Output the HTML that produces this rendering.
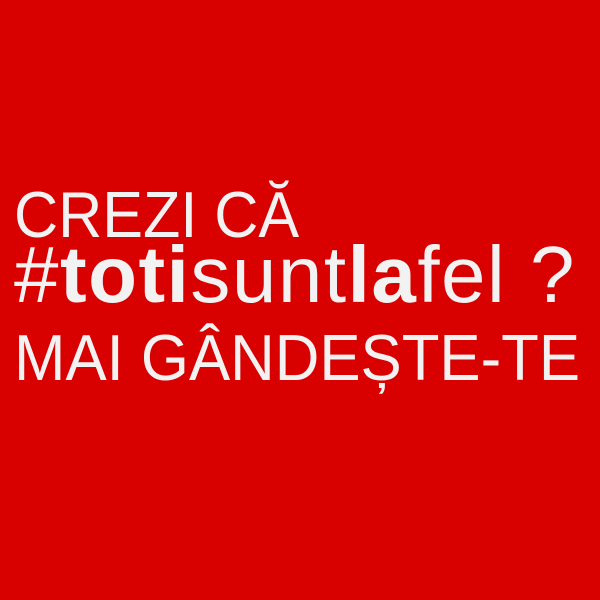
<!DOCTYPE html>
<html><head><meta charset="utf-8"><style>
html,body{margin:0;padding:0;}
body{width:600px;height:600px;background:#d90000;position:relative;overflow:hidden;font-family:"Liberation Sans",Arial,sans-serif;color:#f2f2f2;}
.l{position:absolute;left:14px;line-height:1;white-space:nowrap;transform-origin:0 0;}
#a{top:182px;font-size:65px;transform:scaleX(0.94);}
#b{top:235px;font-size:80px;letter-spacing:1.5px;}
#c{top:325px;font-size:65px;transform:scaleX(0.95);}
b{font-weight:bold;}
</style></head><body>
<div class="l" id="a">CREZI CĂ</div>
<div class="l" id="b">#<b>toti</b>sunt<b>la</b>fel&nbsp;?</div>
<div class="l" id="c">MAI GÂNDEȘTE-TE</div>
</body></html>
